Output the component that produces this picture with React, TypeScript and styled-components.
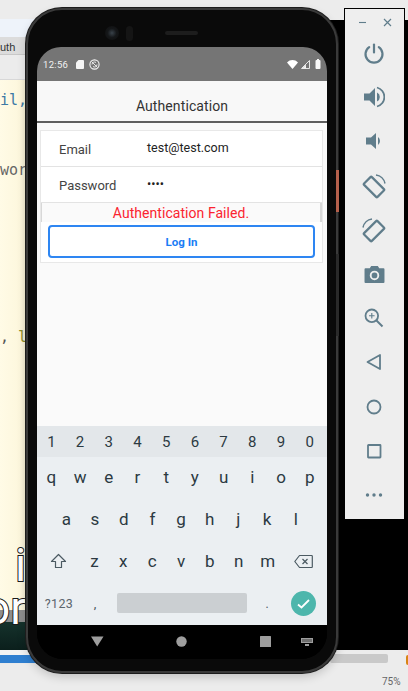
import React from "react";
import styled, { createGlobalStyle } from "styled-components";

const Global = createGlobalStyle`
  html, body { margin: 0; padding: 0; width: 408px; height: 691px; overflow: hidden; background: #ececec; }
  * { box-sizing: border-box; }
  #root { width: 408px; height: 691px; }
`;

const Desktop = styled.div`
  position: relative;
  width: 408px;
  height: 691px;
  overflow: hidden;
  background: #ececec;
  font-family: Roboto, "Liberation Sans", sans-serif;
`;

const BackdropDark = styled.div`
  position: absolute;
  left: 300px;
  top: 20px;
  width: 108px;
  height: 630px;
  background: #000;
`;

const EditorWindow = styled.div`
  position: absolute;
  left: 0;
  top: 19px;
  width: 60px;
  height: 645px;
  display: flex;
  flex-direction: column;
  background: #e9e9e9;
`;
const EditorTitle = styled.div`
  height: 18px;
  flex: none;
  background: #eef3fa;
`;
const EditorTabs = styled.div`
  height: 18px;
  flex: none;
  background: #dcdcdc;
  border-bottom: 1px solid #c8c8c8;
  font: 11px "Liberation Sans", sans-serif;
  color: #333;
  line-height: 20px;
`;
const EditorTools = styled.div`
  height: 25px;
  flex: none;
  background: #ececec;
  border-bottom: 1px solid #d8d8d8;
`;
const EditorBody = styled.div`
  position: relative;
  height: 542px;
  flex: none;
  background: linear-gradient(90deg, #fffbe6 0, #fdf7dd 20px, #efe9cf 28px);
`;
const EditorBand = styled.div`
  position: absolute;
  left: 0;
  bottom: 0;
  width: 100%;
  height: 12px;
  background: #8e8e8e;
`;
const CodeText = styled.span<{ $top: number; $left?: number; $color: string }>`
  position: absolute;
  top: ${(p) => p.$top}px;
  left: ${(p) => p.$left ?? 0}px;
  font: 15px "DejaVu Sans Mono", monospace;
  color: ${(p) => p.$color};
  white-space: pre;
`;
const Caption = styled.span<{ $top: number; $left: number }>`
  position: absolute;
  top: ${(p) => p.$top}px;
  left: ${(p) => p.$left}px;
  font: 400 46px Roboto, sans-serif;
  color: #fff;
  -webkit-text-stroke: 2px #1a1a1a;
  paint-order: stroke fill;
  line-height: 1;
`;
const EditorVideo = styled.div`
  height: 28px;
  flex: none;
  background: linear-gradient(#15322c, #0b1f1c);
`;
const EditorGap = styled.div`
  height: 5px;
  flex: none;
  background: #f3f3f3;
`;
const EditorProgress = styled.div`
  height: 8px;
  flex: none;
  background: #2f7fd0;
`;

const ProgressTrack = styled.div`
  position: absolute;
  left: 330px;
  top: 654px;
  width: 58px;
  height: 9px;
  border-radius: 2px;
  background: #c9c9c9;
`;
const Percent = styled.span`
  position: absolute;
  left: 382px;
  top: 676px;
  font: 10px Roboto, sans-serif;
  color: #666;
`;
const OrangeDot = styled.span`
  position: absolute;
  left: 406px;
  top: 655px;
  width: 4px;
  height: 10px;
  border-radius: 2px;
  background: #d88414;
`;

const PhoneBody = styled.div`
  position: absolute;
  left: 26px;
  top: 8px;
  width: 312px;
  height: 665px;
  border-radius: 36px;
  background: #0a0a0a;
  border: 2px solid #3a3a3a;
  box-shadow: 0 0 0 1px #1c1c1c, 0 4px 10px rgba(0, 0, 0, 0.18);
  padding: 37px 0 0 9px;
`;
const Camera = styled.div`
  position: absolute;
  left: 77px;
  top: 16px;
  width: 14px;
  height: 14px;
  border-radius: 50%;
  background: radial-gradient(circle, #39424a 0, #151719 45%, #0d0d0d 100%);
`;
const Sensor = styled.div`
  position: absolute;
  left: 98px;
  top: 16px;
  width: 7px;
  height: 15px;
  border-radius: 4px;
  background: #151515;
`;
const Speaker = styled.div`
  position: absolute;
  left: 137px;
  top: 21px;
  width: 33px;
  height: 4px;
  border-radius: 2px;
  background: #1d1d1d;
`;
const SideButton = styled.div`
  position: absolute;
  right: -3px;
  top: 160px;
  width: 3px;
  height: 42px;
  background: #b5604c;
`;
const SideButtonDark = styled.div`
  position: absolute;
  right: -3px;
  top: 244px;
  width: 3px;
  height: 82px;
  background: #2a2a2a;
`;

const Screen = styled.div`
  width: 290px;
  height: 612px;
  display: flex;
  flex-direction: column;
  border-radius: 24px 24px 26px 26px;
  overflow: hidden;
  background: #000;
`;
const StatusBar = styled.div`
  height: 34px;
  flex: none;
  display: flex;
  align-items: center;
  padding: 0 6px;
  gap: 5px;
  background: #757575;
  color: #f2f2f2;
`;
const Clock = styled.span`
  font-size: 9.5px;
  letter-spacing: 0.3px;
  margin-right: 3px;
`;
const StatusSpacer = styled.div`
  flex: 1;
`;
const StatusGroup = styled.div`
  display: flex;
  align-items: center;
  gap: 3px;
`;
const Header = styled.div`
  height: 42px;
  flex: none;
  background: #f8f8f8;
  border-bottom: 2px solid #5f5f5f;
  display: flex;
  align-items: center;
  justify-content: center;
  padding-top: 10px;
  font-size: 14px;
  letter-spacing: 0.1px;
  color: #333;
`;
const Content = styled.div`
  height: 303px;
  flex: none;
  background: #fafafa;
  padding: 7px 4px 0 3px;
`;
const Card = styled.div`
  height: 133px;
  background: #fff;
  border: 1px solid #e8e8e8;
  display: flex;
  flex-direction: column;
`;
const FieldRow = styled.div`
  height: 36px;
  flex: none;
  display: grid;
  grid-template-columns: 88px 1fr;
  padding-left: 18px;
  border-bottom: 1px solid #e3e3e3;
  align-items: center;
`;
const FieldLabel = styled.span`
  font-size: 13px;
  color: #444;
  padding-top: 1px;
`;
const FieldValue = styled.span`
  font-size: 12.5px;
  color: #222;
  margin-top: -3px;
`;
const ErrorRow = styled.div`
  height: 19px;
  flex: none;
  background: #fafafa;
  border-left: 1px solid #d8d8d8;
  border-right: 2px solid #d8d8d8;
  color: #fb2330;
  font-size: 14px;
  letter-spacing: 0.05px;
  line-height: 20px;
  text-align: center;
`;
const LoginButton = styled.button`
  display: block;
  height: 33px;
  margin: 3px 7px 0 7px;
  border: 2px solid #2e86f2;
  border-radius: 4px;
  background: #fff;
  color: #1a7df5;
  font: 700 11.5px Roboto, sans-serif;
  padding: 0;
`;

const Keyboard = styled.div`
  height: 199px;
  flex: none;
  display: flex;
  flex-direction: column;
  background: #ebeff2;
  color: #2c3a42;
`;
const KeyRow = styled.div<{ $h: number; $left?: number; $right?: number; $bg?: string }>`
  height: ${(p) => p.$h}px;
  flex: none;
  display: flex;
  align-items: center;
  padding: 0 ${(p) => p.$right ?? 0}px 0 ${(p) => p.$left ?? 0}px;
  background: ${(p) => p.$bg ?? "transparent"};
`;
const Key = styled.span<{ $small?: boolean }>`
  flex: 1 1 0;
  text-align: center;
  font-size: ${(p) => (p.$small ? 15 : 17)}px;
  line-height: 1;
  padding-top: ${(p) => (p.$small ? 1 : 0)}px;
`;
const IconKey = styled.span`
  flex: 0 0 43px;
  display: flex;
  align-items: center;
  justify-content: center;
`;
const SymKey = styled.span`
  flex: 0 0 44px;
  text-align: center;
  font-size: 12.5px;
  color: #5b666d;
  letter-spacing: 0.4px;
  margin-top: -1px;
`;
const CommaKey = styled.span`
  flex: 0 0 28px;
  text-align: center;
  font-size: 13px;
  color: #4d585f;
`;
const SpaceBar = styled.span`
  flex: 0 0 130px;
  height: 20px;
  margin-left: 8px;
  margin-top: -2px;
  border-radius: 2px;
  background: #cbcfd2;
`;
const PeriodKey = styled.span`
  flex: 0 0 40px;
  text-align: center;
  font-size: 12px;
  color: #4d585f;
`;
const DoneKey = styled.span`
  width: 25px;
  height: 25px;
  flex: none;
  margin-left: 4px;
  border-radius: 50%;
  background: #4db6ac;
  display: flex;
  align-items: center;
  justify-content: center;
`;
const NavBar = styled.div`
  flex: 1;
  display: flex;
  align-items: center;
  gap: 72.5px;
  background: #000;
  padding: 0 0 1px 53.5px;
`;
const NavTail = styled.span`
  display: flex;
  margin-left: -42px;
`;

const SidePanel = styled.div`
  position: absolute;
  left: 345px;
  top: 9px;
  width: 59px;
  height: 510px;
  background: #eeeeee;
  outline: 1px solid #000;
  display: flex;
  flex-direction: column;
  align-items: center;
  padding-right: 1px;
`;
const WindowControls = styled.div`
  height: 22px;
  width: 100%;
  flex: none;
  display: flex;
  align-items: center;
  justify-content: space-between;
  padding: 4px 11px 0 13px;
`;
const ToolButton = styled.div`
  height: 44.2px;
  width: 100%;
  flex: none;
  display: flex;
  align-items: center;
  justify-content: center;
`;

const ic = "#607d8b";

const Power = () => (
  <svg width="22" height="22" viewBox="0 0 22 22" fill="none" stroke={ic} strokeWidth="2.2" strokeLinecap="round">
    <path d="M11 2.500v8" />
    <path d="M6.200 5.200a8.500 8.500 0 1 0 9.600 0" />
  </svg>
);
const VolUp = () => (
  <svg width="22" height="22" viewBox="0 0 22 22">
    <path d="M1 7.500h5.500L12 2v18l-5.500-5.500H1z" fill={ic} />
    <path d="M14 6.500a5 5 0 0 1 0 9z" fill={ic} />
    <path d="M14 1.500a9.800 9.800 0 0 1 0 19" fill="none" stroke={ic} strokeWidth="1.800" />
  </svg>
);
const VolDown = () => (
  <svg width="22" height="22" viewBox="0 0 22 22">
    <path d="M3 7.500h5L13 3v16l-5-4.500H3z" fill={ic} />
    <path d="M15 7a5 5 0 0 1 0 8z" fill={ic} />
  </svg>
);
const RotateLeft = () => (
  <svg width="26" height="26" viewBox="0 0 26 26" fill="none" stroke={ic}>
    <rect x="7.500" y="4.500" width="11" height="19" rx="1" transform="rotate(-45 13 14)" strokeWidth="2.200" />
    <path d="M15 2a10.500 10.500 0 0 1 9 8.500" strokeWidth="1.500" />
  </svg>
);
const RotateRight = () => (
  <svg width="26" height="26" viewBox="0 0 26 26" fill="none" stroke={ic}>
    <rect x="7.500" y="4.500" width="11" height="19" rx="1" transform="rotate(45 13 14)" strokeWidth="2.200" />
    <path d="M2 10.500a10.500 10.500 0 0 1 9-8.500" strokeWidth="1.500" />
  </svg>
);
const CameraIcon = () => (
  <svg width="21" height="19" viewBox="0 0 22 20">
    <path d="M1.500 3.500h4.500l1.500-2.500h7l1.500 2.500h4.500a1 1 0 0 1 1 1V18a1 1 0 0 1-1 1h-19a1 1 0 0 1-1-1V4.500a1 1 0 0 1 1-1z" fill={ic} />
    <circle cx="11" cy="11" r="4" fill="none" stroke="#eee" strokeWidth="2" />
  </svg>
);
const ZoomIcon = () => (
  <svg width="20" height="20" viewBox="0 0 20 20" fill="none" stroke={ic}>
    <circle cx="7.800" cy="7.800" r="6.300" strokeWidth="1.800" />
    <path d="M12.500 12.500L18.500 18.500" strokeWidth="2" />
    <path d="M7.800 5v5.600M5 7.800h5.600" strokeWidth="1.100" />
  </svg>
);
const BackIcon = () => (
  <svg width="16" height="18" viewBox="0 0 16 18" fill="none" stroke={ic} strokeWidth="1.800">
    <path d="M1.500 9L14 2v14z" strokeLinejoin="round" />
  </svg>
);
const HomeIcon = () => (
  <svg width="16" height="16" viewBox="0 0 16 16" fill="none" stroke={ic} strokeWidth="1.800">
    <circle cx="8" cy="8" r="6.500" />
  </svg>
);
const SquareIcon = () => (
  <svg width="16" height="16" viewBox="0 0 16 16" fill="none" stroke={ic} strokeWidth="1.800">
    <rect x="2" y="2" width="12.500" height="12.500" rx="0.500" />
  </svg>
);
const MoreIcon = () => (
  <svg width="18" height="6" viewBox="0 0 18 6" fill={ic}>
    <circle cx="2.500" cy="3" r="1.700" />
    <circle cx="9" cy="3" r="1.700" />
    <circle cx="15.500" cy="3" r="1.700" />
  </svg>
);
const Minimize = () => (
  <svg width="9" height="3" viewBox="0 0 9 3"><path d="M1 1.500h7" stroke={ic} strokeWidth="1.100" /></svg>
);
const CloseIcon = () => (
  <svg width="9" height="9" viewBox="0 0 9 9"><path d="M1 1l7 7M8 1L1 8" stroke={ic} strokeWidth="1.200" /></svg>
);

const SdCard = () => (
  <svg width="8" height="9" viewBox="0 0 8 9"><path d="M2.500 0H7a1 1 0 0 1 1 1v7a1 1 0 0 1-1 1H1a1 1 0 0 1-1-1V2.500z" fill="#f4f4f4" /></svg>
);
const SyncOff = () => (
  <svg width="11" height="11" viewBox="0 0 11 11" fill="none" stroke="#f2f2f2">
    <circle cx="5.500" cy="5.500" r="4.600" strokeWidth="1.100" />
    <path d="M3 5.500a2.500 2.500 0 0 1 4-2M8 5.500a2.500 2.500 0 0 1-4 2" strokeWidth="0.900" />
    <path d="M2.500 2.500l6 6" strokeWidth="0.900" />
  </svg>
);
const Wifi = () => (
  <svg width="11" height="9" viewBox="0 0 11 9"><path d="M0 2.500C3-.8 8-.8 11 2.500L5.500 9z" fill="#fff" /></svg>
);
const Signal = () => (
  <svg width="9" height="9" viewBox="0 0 9 9">
    <path d="M8.500.5v8h-8z" fill="none" stroke="#f2f2f2" strokeWidth="0.900" />
    <path d="M5 4.500v4H1z" fill="#f2f2f2" />
  </svg>
);
const Battery = () => (
  <svg width="6" height="10" viewBox="0 0 6 10"><path d="M1.500 1H2V0h2v1h.5a1 1 0 0 1 1 1v7a1 1 0 0 1-1 1h-3a1 1 0 0 1-1-1V2a1 1 0 0 1 1-1z" fill="#f8f8f8" /></svg>
);
const Shift = () => (
  <svg width="17" height="16" viewBox="0 0 17 16" fill="none" stroke="#4b5a62" strokeWidth="1.200">
    <path d="M8.500 1.500L15.500 8.500H11.500V14.500H5.500V8.500H1.500z" strokeLinejoin="round" />
  </svg>
);
const Backspace = () => (
  <svg width="19" height="15" viewBox="0 0 19 15" fill="none" stroke="#4b5a62" strokeWidth="1.200">
    <path d="M5.500 1.500H17.500a.8.8 0 0 1 .8.8V12.700a.8.8 0 0 1-.8.8H5.500L.8 7.500z" strokeLinejoin="round" />
    <path d="M8.500 5l5 5M13.500 5l-5 5" />
  </svg>
);
const Check = () => (
  <svg width="13" height="10" viewBox="0 0 13 10" fill="none" stroke="#fff" strokeWidth="1.800">
    <path d="M1 5.500l3.500 3L12 1" />
  </svg>
);
const NavBack = () => (
  <svg width="13" height="11" viewBox="0 0 13 11"><path d="M0 .5h12.500L6.200 10.500z" fill="#9e9e9e" /></svg>
);
const NavHome = () => (
  <svg width="11" height="11" viewBox="0 0 11 11"><circle cx="5.500" cy="5.500" r="5.200" fill="#9e9e9e" /></svg>
);
const NavRecent = () => (
  <svg width="11" height="11" viewBox="0 0 11 11"><rect width="11" height="11" rx="0.500" fill="#9e9e9e" /></svg>
);
const NavKeyboard = () => (
  <svg width="12" height="8" viewBox="0 0 12 8" fill="#9e9e9e">
    <path d="M0 0h12v5H0z" />
    <path d="M4 6h4v2H4z" />
    <path d="M2 1v3M4 1v3M6 1v3M8 1v3M10 1v3" stroke="#000" strokeWidth="0.600" />
  </svg>
);

const digits = "1234567890".split("");
const row1 = "qwertyuiop".split("");
const row2 = "asdfghjkl".split("");
const row3 = "zxcvbnm".split("");

export default function App() {
  return (
    <Desktop>
      <Global />
      <BackdropDark />
      <EditorWindow>
        <EditorTitle />
        <EditorTabs>uth</EditorTabs>
        <EditorTools />
        <EditorBody>
          <CodeText $top={11} $color="#3d7aa5">il,</CodeText>
          <CodeText $top={81} $color="#666">wor</CodeText>
          <CodeText $top={248} $color="#555">,</CodeText>
          <CodeText $top={248} $left={18} $color="#8d8d2a">l</CodeText>
          <EditorBand />
          <Caption $top={462} $left={15}>i</Caption>
          <Caption $top={505} $left={-16}>or</Caption>
        </EditorBody>
        <EditorVideo />
        <EditorGap />
        <EditorProgress />
      </EditorWindow>
      <ProgressTrack />
      <OrangeDot />
      <Percent>75%</Percent>

      <PhoneBody>
        <Camera />
        <Sensor />
        <Speaker />
        <SideButton />
        <SideButtonDark />
        <Screen>
          <StatusBar>
            <Clock>12:56</Clock>
            <SdCard />
            <SyncOff />
            <StatusSpacer />
            <StatusGroup>
              <Wifi />
              <Signal />
            </StatusGroup>
            <Battery />
          </StatusBar>
          <Header>Authentication</Header>
          <Content>
            <Card>
              <FieldRow>
                <FieldLabel>Email</FieldLabel>
                <FieldValue>test@test.com</FieldValue>
              </FieldRow>
              <FieldRow>
                <FieldLabel>Password</FieldLabel>
                <FieldValue>••••</FieldValue>
              </FieldRow>
              <ErrorRow>Authentication Failed.</ErrorRow>
              <LoginButton>Log In</LoginButton>
            </Card>
          </Content>
          <Keyboard>
            <KeyRow $h={31} $right={3} $bg="#e3e7ea">
              {digits.map((k) => (
                <Key key={k} $small>{k}</Key>
              ))}
            </KeyRow>
            <KeyRow $h={41} $right={3}>
              {row1.map((k) => (
                <Key key={k}>{k}</Key>
              ))}
            </KeyRow>
            <KeyRow $h={42} $left={15} $right={17}>
              {row2.map((k) => (
                <Key key={k}>{k}</Key>
              ))}
            </KeyRow>
            <KeyRow $h={42} $right={2}>
              <IconKey><Shift /></IconKey>
              {row3.map((k) => (
                <Key key={k}>{k}</Key>
              ))}
              <IconKey><Backspace /></IconKey>
            </KeyRow>
            <KeyRow $h={43}>
              <SymKey>?123</SymKey>
              <CommaKey>,</CommaKey>
              <SpaceBar />
              <PeriodKey>.</PeriodKey>
              <DoneKey><Check /></DoneKey>
            </KeyRow>
          </Keyboard>
          <NavBar>
            <NavBack />
            <NavHome />
            <NavRecent />
            <NavTail><NavKeyboard /></NavTail>
          </NavBar>
        </Screen>
      </PhoneBody>

      <SidePanel>
        <WindowControls>
          <Minimize />
          <CloseIcon />
        </WindowControls>
        <ToolButton><Power /></ToolButton>
        <ToolButton><VolUp /></ToolButton>
        <ToolButton><VolDown /></ToolButton>
        <ToolButton><RotateLeft /></ToolButton>
        <ToolButton><RotateRight /></ToolButton>
        <ToolButton><CameraIcon /></ToolButton>
        <ToolButton><ZoomIcon /></ToolButton>
        <ToolButton><BackIcon /></ToolButton>
        <ToolButton><HomeIcon /></ToolButton>
        <ToolButton><SquareIcon /></ToolButton>
        <ToolButton><MoreIcon /></ToolButton>
      </SidePanel>
    </Desktop>
  );
}
